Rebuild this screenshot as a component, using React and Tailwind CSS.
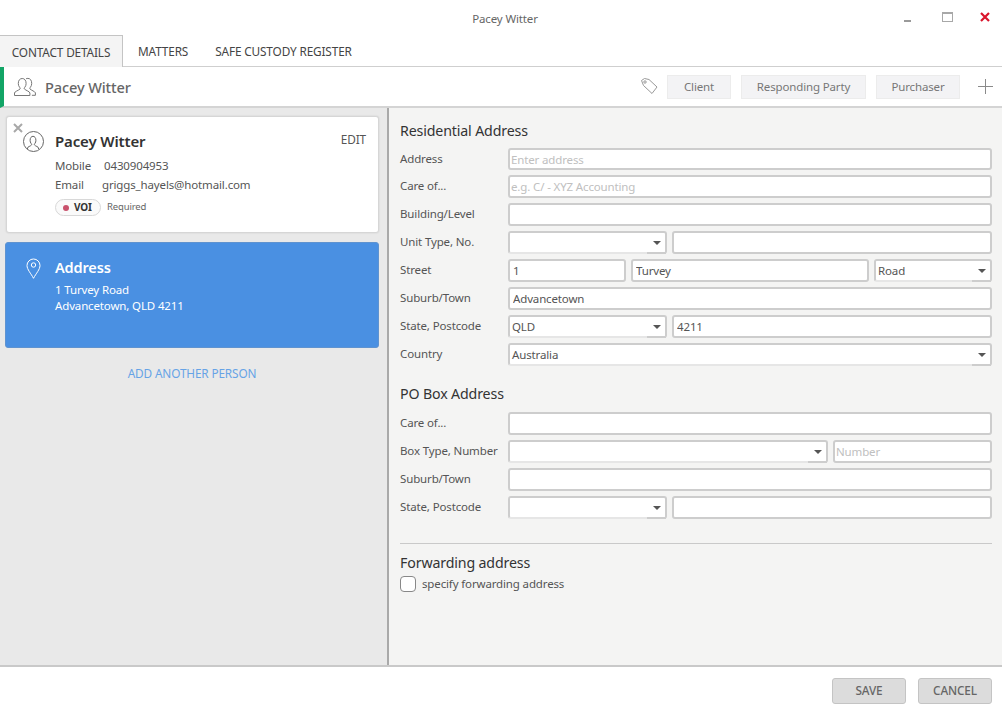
const FONT = "font-['Noto_Sans','Open_Sans',sans-serif] tracking-[-0.14px]";

function Input({ value = "", placeholder = "", className = "flex-1" }) {
  const pad = value ? "px-[3px]" : "px-[1px]";
  return (
    <input
      readOnly
      value={value}
      placeholder={placeholder}
      className={`${className} ${pad} min-w-0 h-[23px] bg-white border-2 border-[#cdcdcd] rounded-[3px] text-[11.5px] text-[#555] placeholder:text-[#c0c0c0] outline-none`}
    />
  );
}

function Select({ value = "", className = "flex-1" }) {
  return (
    <div className={`${className} min-w-0 relative h-[23px] bg-white border-2 border-[#cdcdcd] border-b-[#e6e6e6] rounded-[3px] px-[2px] flex items-center text-[11.5px] text-[#555]`}>
      <span>{value}</span>
      <span className="absolute right-[4px] top-[8px] w-0 h-0 border-l-[4px] border-r-[4px] border-t-[4px] border-l-transparent border-r-transparent border-t-[#555]" />
      <span className="absolute -right-[1px] -bottom-[2px] w-[19px] h-[2px] bg-[#cdcdcd]" />
    </div>
  );
}

function Row({ label, children }) {
  return (
    <div className="flex items-center">
      <div className="w-[108px] shrink-0 text-[11.5px] text-[#555] -mt-[1px]">{label}</div>
      <div className="flex-1 min-w-0 flex gap-[5px]">{children}</div>
    </div>
  );
}

function Tag({ children, className }) {
  return (
    <div className={`${className} h-[24px] pt-[1px] bg-[#f3f3f5] border border-[#ececec] flex items-center justify-center text-[11.5px] text-[#777]`}>
      {children}
    </div>
  );
}

export default function App() {
  return (
    <div className={`${FONT} w-[1002px] h-[714px] bg-white flex flex-col overflow-hidden`}>
      {/* title bar */}
      <div className="h-[35px] shrink-0 relative flex items-center justify-center pl-[8px] pt-[2px] text-[11.5px] text-[#666]">
        Pacey Witter
        <div className="absolute right-0 top-0 h-[35px]">
          <svg width="102" height="35" viewBox="0 0 102 35">
            <rect x="4" y="20" width="7" height="2" fill="#9a9a9a" />
            <rect x="42.5" y="12.5" width="10" height="9" fill="none" stroke="#a8a8a8" />
            <rect x="42" y="12" width="11" height="2" fill="#a8a8a8" />
            <path d="M81 13 L89 21 M89 13 L81 21" stroke="#d9142b" strokeWidth="2.2" />
          </svg>
        </div>
      </div>

      {/* tabs */}
      <div className="h-[32px] shrink-0 flex items-stretch border-b border-[#cfcfcf] text-[11.8px] text-[#444]">
        <div className="w-[123px] h-[32px] bg-[#f4f4f4] border-t border-r border-[#c4c4c4] flex items-center justify-center pt-[2px]">CONTACT DETAILS</div>
        <div className="ml-[15px] flex items-center pt-[2px]">MATTERS</div>
        <div className="ml-[27px] flex items-center pt-[2px]">SAFE CUSTODY REGISTER</div>
      </div>

      {/* header */}
      <div className="h-[41px] shrink-0 flex items-center border-b-2 border-[#d4d4d4] border-l-[4px] border-l-[#12a566]">
        <svg className="ml-[9px]" width="24" height="20" viewBox="0 0 24 20" fill="none" stroke="#777" strokeWidth="1">
          <path d="M1.5 18.5v-2.5c0-1.5 4-2.5 5.5-4 .5-.6 0-1.2-.6-2-.8-1-1.1-2.2-1.1-3.6C5.3 3.2 7 1.5 9.2 1.5s3.900 1.700 3.900 4.900c0 1.400-.3 2.600-1.100 3.600-.6.8-1.100 1.400-.6 2 1.500 1.500 5.500 2.500 5.500 4v2.500z" />
          <path d="M13 1.800c.6-.3 1.200-.4 1.900-.4 2.200 0 3.800 1.800 3.800 5 0 1.400-.4 2.600-1.100 3.600-.6.800-1.100 1.400-.6 2 1.300 1.300 4.900 2.400 5.400 3.800v2.500h-3.500" />
        </svg>
        <div className="ml-[8px] pt-[2px] text-[14.6px] font-medium text-[#666]">Pacey Witter</div>
        <div className="flex-1" />
        <svg width="18" height="18" viewBox="0 0 18 18" fill="none" stroke="#999" strokeWidth="1" className="mr-[9px] -mt-[2px]">
          <path d="M1.500 3.500 L4.500 1.500 L9 2.500 L17 10 L12 16.500 L3.500 8.500z" />
          <circle cx="5" cy="5" r="1.200" />
        </svg>
        <Tag className="w-[64px] mr-[10px]">Client</Tag>
        <Tag className="w-[125px] mr-[10px]">Responding Party</Tag>
        <Tag className="w-[84px] mr-[18px]">Purchaser</Tag>
        <svg width="15" height="15" viewBox="0 0 15 15" stroke="#8a8a8a" strokeWidth="1" className="mr-[9px]">
          <path d="M7.500 0V15M0 7.500H15" />
        </svg>
      </div>

      {/* body */}
      <div className="flex-1 min-h-0 flex">
        <div className="w-[389px] shrink-0 bg-[#e9e9e9] border-r-2 border-[#a9a9a9] pl-[5px] pr-[8px] pt-[8px]">
          {/* contact card */}
          <div className="relative ml-[1px] w-[373px] h-[117px] bg-white border border-[#d6d6d6] rounded-[3px] shadow-[0_0_2px_rgba(0,0,0,0.12)]">
            <svg width="10" height="10" viewBox="0 0 10 10" className="absolute left-[6px] top-[6px]" stroke="#a8a8a8" strokeWidth="2">
              <path d="M1 1L9 9M9 1L1 9" />
            </svg>
            <svg width="21" height="21" viewBox="0 0 21 21" fill="none" stroke="#666" strokeWidth="1" className="absolute left-[16px] top-[14px]">
              <circle cx="10.500" cy="10.500" r="10" />
              <path d="M4.500 18v-1c0-1.200 3-1.800 4-3 .4-.5 0-1-.5-1.700-.6-.8-.9-1.700-.9-3 0-2.500 1.300-4 2.900-4s2.900 1.500 2.900 4c0 1.300-.3 2.200-.9 3-.5.700-.9 1.200-.5 1.700 1 1.200 4 1.800 4 3v1" />
            </svg>
            <div className="absolute right-[12px] top-[14px] text-[11.8px] text-[#555]">EDIT</div>
            <div className="pl-[48px] pt-[14px]">
              <div className="text-[15px] font-semibold text-[#333] leading-[21px]">Pacey Witter</div>
              <div className="flex text-[11.5px] text-[#555] leading-[18px] mt-[5px]">
                <span className="w-[49px]">Mobile</span><span>0430904953</span>
              </div>
              <div className="flex text-[11.5px] text-[#555] leading-[18px] mt-[1px]">
                <span className="w-[47px]">Email</span><span>griggs_hayels@hotmail.com</span>
              </div>
              <div className="flex items-center mt-[5px]">
                <div className="w-[46px] h-[17px] rounded-full bg-[#fafafa] border border-[#d8d8d8] flex items-center pl-[7px]">
                  <span className="w-[6px] h-[6px] rounded-full bg-[#c9516c]" />
                  <span className="ml-[5px] text-[10px] font-bold text-[#333]">VOI</span>
                </div>
                <span className="ml-[6px] text-[9.500px] text-[#666]">Required</span>
              </div>
            </div>
          </div>

          {/* address card */}
          <div className="relative mt-[9px] w-[374px] h-[106px] bg-[#4a90e2] border border-[#5f93d0] rounded-[3px] text-white">
            <svg width="15" height="21" viewBox="0 0 15 21" fill="none" stroke="#fff" strokeWidth="1" className="absolute left-[20px] top-[15px]">
              <path d="M7.500 20.300C5 15.500 1 11.500 1 7.500a6.500 6.500 0 0 1 13 0c0 4-4 8-6.500 12.800z" />
              <circle cx="7.500" cy="7" r="2.200" />
            </svg>
            <div className="pl-[49px] pt-[14px]">
              <div className="text-[14.500px] font-semibold leading-[20px]">Address</div>
              <div className="text-[11.5px] leading-[16px] mt-[5px]">1 Turvey Road</div>
              <div className="text-[11.5px] leading-[16px]">Advancetown, QLD 4211</div>
            </div>
          </div>

          <div className="mt-[17px] w-[374px] text-center text-[11.8px] text-[#66a3e6]">ADD ANOTHER PERSON</div>
        </div>

        {/* right form */}
        <div className="flex-1 min-w-0 bg-[#f4f4f3] pl-[11px] pr-[10px] pt-[12px]">
          <div className="text-[14.2px] text-[#333] leading-[22px] mb-[6px]">Residential Address</div>
          <div className="flex flex-col gap-[5px]">
            <Row label="Address"><Input placeholder="Enter address" className="flex-1 !h-[22px]" /></Row>
            <Row label="Care of..."><Input placeholder="e.g. C/ - XYZ Accounting" /></Row>
            <Row label="Building/Level"><Input /></Row>
            <Row label="Unit Type, No."><Select className="w-[159px] shrink-0" /><Input /></Row>
            <Row label="Street">
              <Input value="1" className="w-[118px] shrink-0" />
              <Input value="Turvey" />
              <Select value="Road" className="w-[118px] shrink-0" />
            </Row>
            <Row label="Suburb/Town"><Input value="Advancetown" /></Row>
            <Row label="State, Postcode"><Select value="QLD" className="w-[159px] shrink-0" /><Input value="4211" /></Row>
            <Row label="Country"><Select value="Australia" /></Row>
          </div>

          <div className="text-[14.2px] text-[#333] leading-[22px] mt-[17px] mb-[7px]">PO Box Address</div>
          <div className="flex flex-col gap-[5px]">
            <Row label="Care of..."><Input /></Row>
            <Row label="Box Type, Number"><Select className="w-[320px] shrink-0" /><Input placeholder="Number" /></Row>
            <Row label="Suburb/Town"><Input /></Row>
            <Row label="State, Postcode"><Select className="w-[159px] shrink-0" /><Input /></Row>
          </div>

          <div className="mt-[24px] h-px bg-[#c9c9c9]" />
          <div className="text-[14.2px] text-[#333] leading-[22px] mt-[8px]">Forwarding address</div>
          <div className="flex items-center mt-[1px]">
            <div className="w-[16px] h-[16px] bg-white border border-[#888] rounded-[4px]" />
            <span className="ml-[6px] text-[11.5px] text-[#555]">specify forwarding address</span>
          </div>
        </div>
      </div>

      {/* footer */}
      <div className="h-[49px] shrink-0 border-t-2 border-[#c9c9c9] flex items-center justify-end pr-[10px] gap-[12px] text-[11.8px] font-medium text-[#666]">
        <div className="w-[74px] h-[26px] pt-[1px] bg-[#dcdcdc] border border-[#c4c4c4] rounded-[3px] flex items-center justify-center">SAVE</div>
        <div className="w-[74px] h-[26px] pt-[1px] bg-[#dcdcdc] border border-[#c4c4c4] rounded-[3px] flex items-center justify-center">CANCEL</div>
      </div>
    </div>
  );
}
